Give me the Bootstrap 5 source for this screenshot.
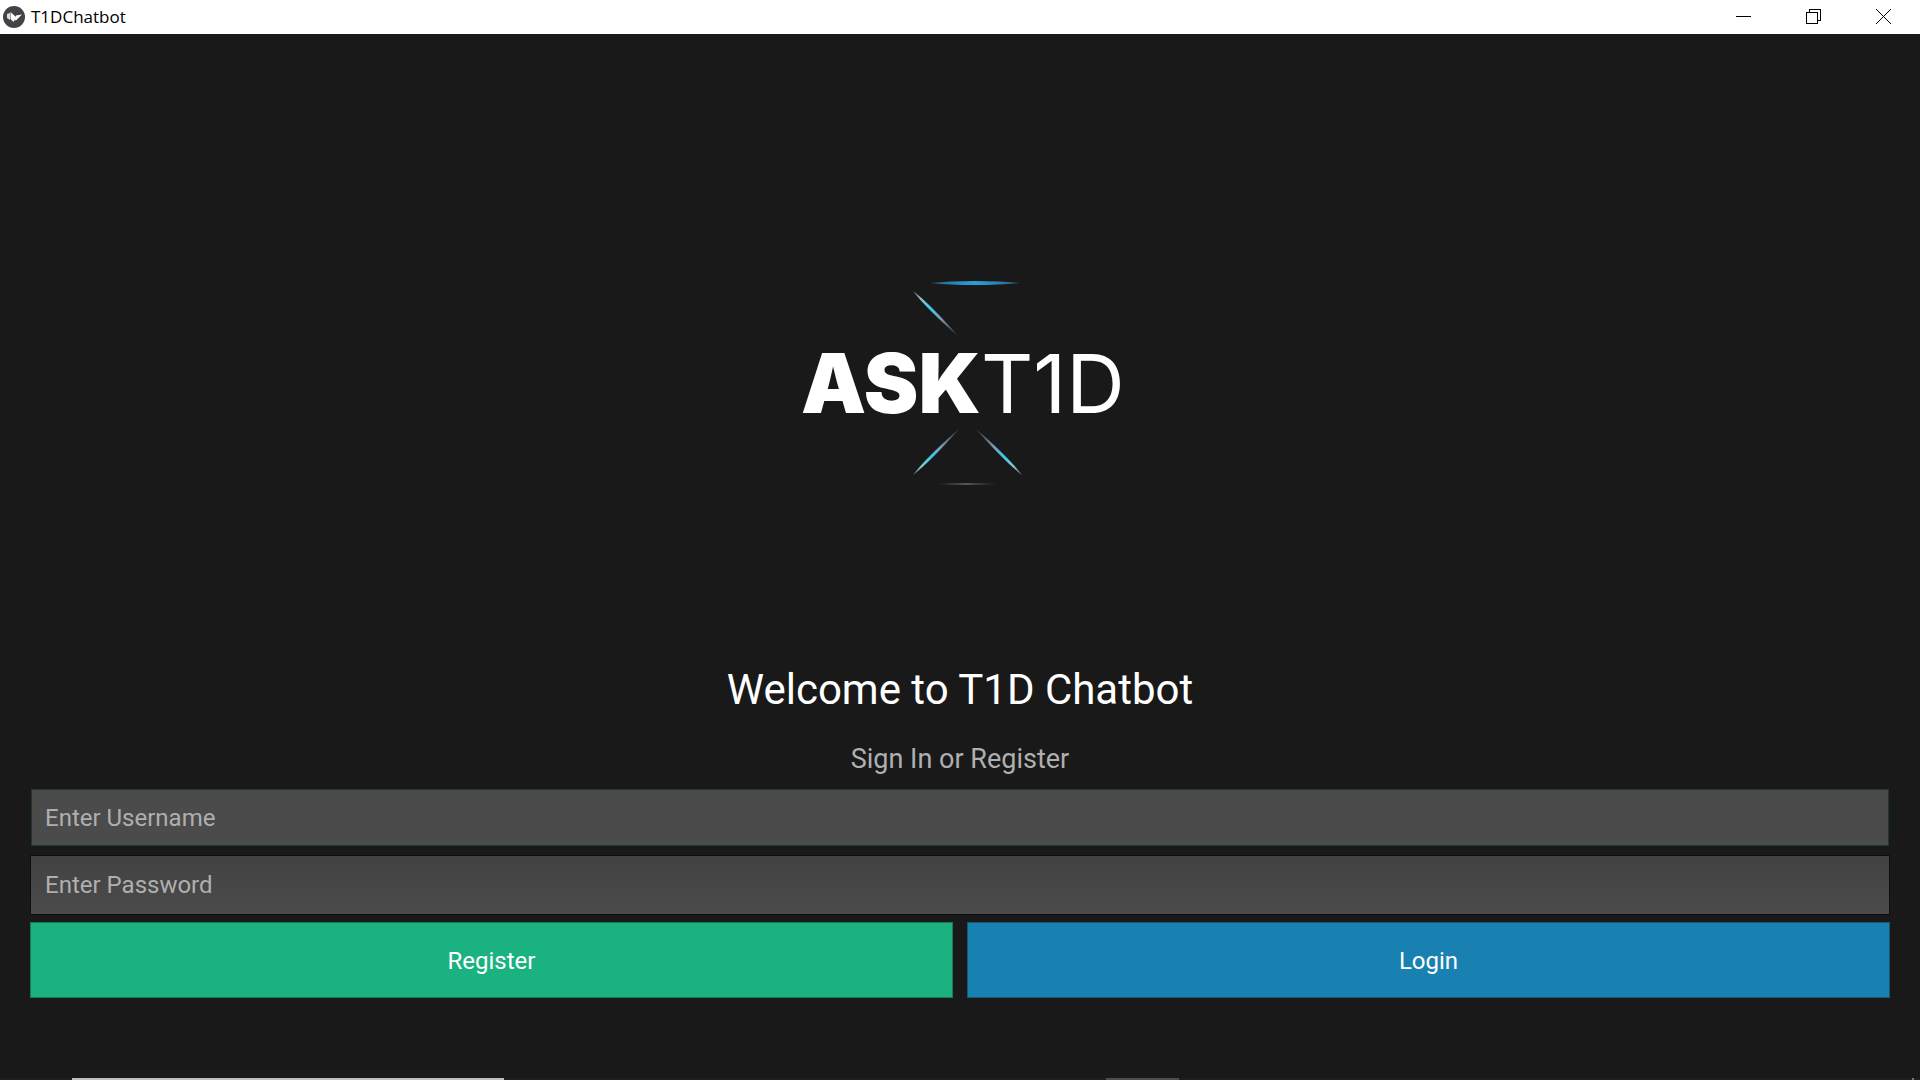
<!DOCTYPE html>
<html lang="en">
<head>
<meta charset="utf-8">
<meta name="viewport" content="width=device-width, initial-scale=1">
<title>T1DChatbot</title>
<link href="https://cdn.jsdelivr.net/npm/bootstrap@5.3.0/dist/css/bootstrap.min.css" rel="stylesheet">
<style>
  body { background: #191919; font-family: Roboto, sans-serif; }
  .titlebar { height: 34px; padding: 0 2px 0 3px; background: #fff; color: #000; }
  .app-name { font: 17px/24px "Open Sans", "Noto Sans", sans-serif; padding-left: 6px; }
  .win-btn { width: 70px; height: 34px; padding: 0 0 1px; border: 0; background: transparent; display: flex; align-items: center; justify-content: center; }
  .logo-area { padding-top: 76px; }
  .welcome { font-size: 42px; line-height: 60px; font-weight: 400; margin-bottom: 9px; color: #fff; }
  .subtitle { font-size: 27px; line-height: 60px; margin: 0; color: #afafaf; }
  .login-form { padding: 0 30px 80px; }
  .field, .field:focus { height: 60px; padding: 0 14px; border-radius: 0; font-size: 24px; color: #fff; border: 1px solid #0e0e0e; background: linear-gradient(#424242, #4b4b4b); box-shadow: none; }
  .field::placeholder { color: #afafaf; opacity: 1; }
  .field-active, .field-active:focus { height: 57px; margin: 0 1px 9px; padding: 0 13px; width: auto; background: #4b4b4b; border-color: #20353e; }
  .actions { margin-top: 7px; gap: 14px; }
  .action { flex: 1 1 0; height: 76px; padding: 2px 0 0; border-radius: 0; font-size: 24px; color: #fff; }
  .action-register { background: #1bb281; border-color: #197a5b; }
  .action-login { background: #1981b2; border-color: #195673; }
  .dock { height: 2px; background: #211d20; }
  .dock-main { width: 22.5%; margin-left: 3.75%; background: #bebebe; }
  .dock-tab { width: 3.8%; margin-left: 31.35%; background: #4d4d4d; }
  .dock-end { width: 2px; margin: 0 6px 0 auto; background: #777; }
</style>
</head>
<body>
<div class="d-flex flex-column min-vh-100">
  <header class="titlebar d-flex align-items-center">
    <svg width="22" height="22" viewBox="0 0 22 22" aria-hidden="true">
      <circle cx="11" cy="11" r="11" fill="#414347"/>
      <path d="M4 8l3-1v7l-3-2z" fill="#ddd"/>
      <path d="M7.500 6l5.500 5-2.500 5-3-3z" fill="#fff"/>
      <path d="M13 9.500l6-1-5.500 5.500-2 .5z" fill="#fff"/>
    </svg>
    <span class="app-name">T1DChatbot</span>
    <div class="d-flex ms-auto">
      <button class="win-btn" type="button" aria-label="Minimize"><svg width="15" height="15" shape-rendering="crispEdges"><path d="M0 7.500h15" stroke="#000"/></svg></button>
      <button class="win-btn" type="button" aria-label="Restore"><svg width="15" height="15" fill="none" stroke="#000" shape-rendering="crispEdges"><path d="M.5 3.500h11v11H.5zM3.500 3.500v-3h11v11h-3"/></svg></button>
      <button class="win-btn" type="button" aria-label="Close"><svg width="15" height="15"><path d="M0 0l15 15M15 0L0 15" stroke="#000"/></svg></button>
    </div>
  </header>

  <main class="flex-grow-1 d-flex flex-column">
    <div class="logo-area flex-grow-1 d-flex align-items-center justify-content-center">
      <svg width="340" height="230" viewBox="0 0 340 230" role="img" aria-label="ASKT1D">
        <defs>
          <linearGradient id="top"><stop offset="0" stop-color="#35505c"/><stop offset=".25" stop-color="#2387b5"/><stop offset=".5" stop-color="#2c9fd6"/><stop offset=".75" stop-color="#2387b5"/><stop offset="1" stop-color="#35505c"/></linearGradient>
          <linearGradient id="ray"><stop offset="0" stop-color="#777"/><stop offset=".18" stop-color="#8fc4d0"/><stop offset=".38" stop-color="#38c8ec"/><stop offset=".6" stop-color="#7d9db5"/><stop offset="1" stop-color="#333"/></linearGradient>
          <linearGradient id="base"><stop offset="0" stop-color="#222"/><stop offset=".5" stop-color="#545a5a"/><stop offset="1" stop-color="#222"/></linearGradient>
        </defs>
        <path d="M140 13Q160 11 185 11Q210 11 230 13Q210 15 185 15Q160 15 140 13z" fill="url(#top)"/>
        <path d="M0 0Q22 -3 64 0Q22 3 0 0z" fill="url(#ray)" transform="translate(123 21) rotate(45)"/>
        <path d="M0 0Q22 -3 66 0Q22 3 0 0z" fill="url(#ray)" transform="translate(123 205) rotate(-45)"/>
        <path d="M0 0Q22 -3 66 0Q22 3 0 0z" fill="url(#ray)" transform="translate(232 205) rotate(-135)"/>
        <path d="M145 214Q176 212 208 214Q176 216 145 214z" fill="url(#base)"/>
        <text x="11" y="143" font-family="Inter, sans-serif" font-size="82" font-weight="900" fill="#fff">ASK</text>
        <text x="191" y="143" font-family="Inter, sans-serif" font-size="81" font-weight="400" fill="#fff">T1D</text>
      </svg>
    </div>
    <div class="text-center">
      <h1 class="welcome">Welcome to T1D Chatbot</h1>
      <p class="subtitle">Sign In or Register</p>
    </div>
    <form class="login-form d-flex flex-column">
      <input class="form-control field field-active" type="text" placeholder="Enter Username" aria-label="Username">
      <input class="form-control field" type="password" placeholder="Enter Password" aria-label="Password">
      <div class="actions d-flex">
        <button class="btn action action-register" type="button">Register</button>
        <button class="btn action action-login" type="button">Login</button>
      </div>
    </form>
  </main>

  <footer class="dock d-flex" aria-hidden="true">
    <div class="dock-main"></div>
    <div class="dock-tab"></div>
    <div class="dock-end"></div>
  </footer>
</div>
<script src="https://cdn.jsdelivr.net/npm/bootstrap@5.3.0/dist/js/bootstrap.bundle.min.js"></script>
</body>
</html>
